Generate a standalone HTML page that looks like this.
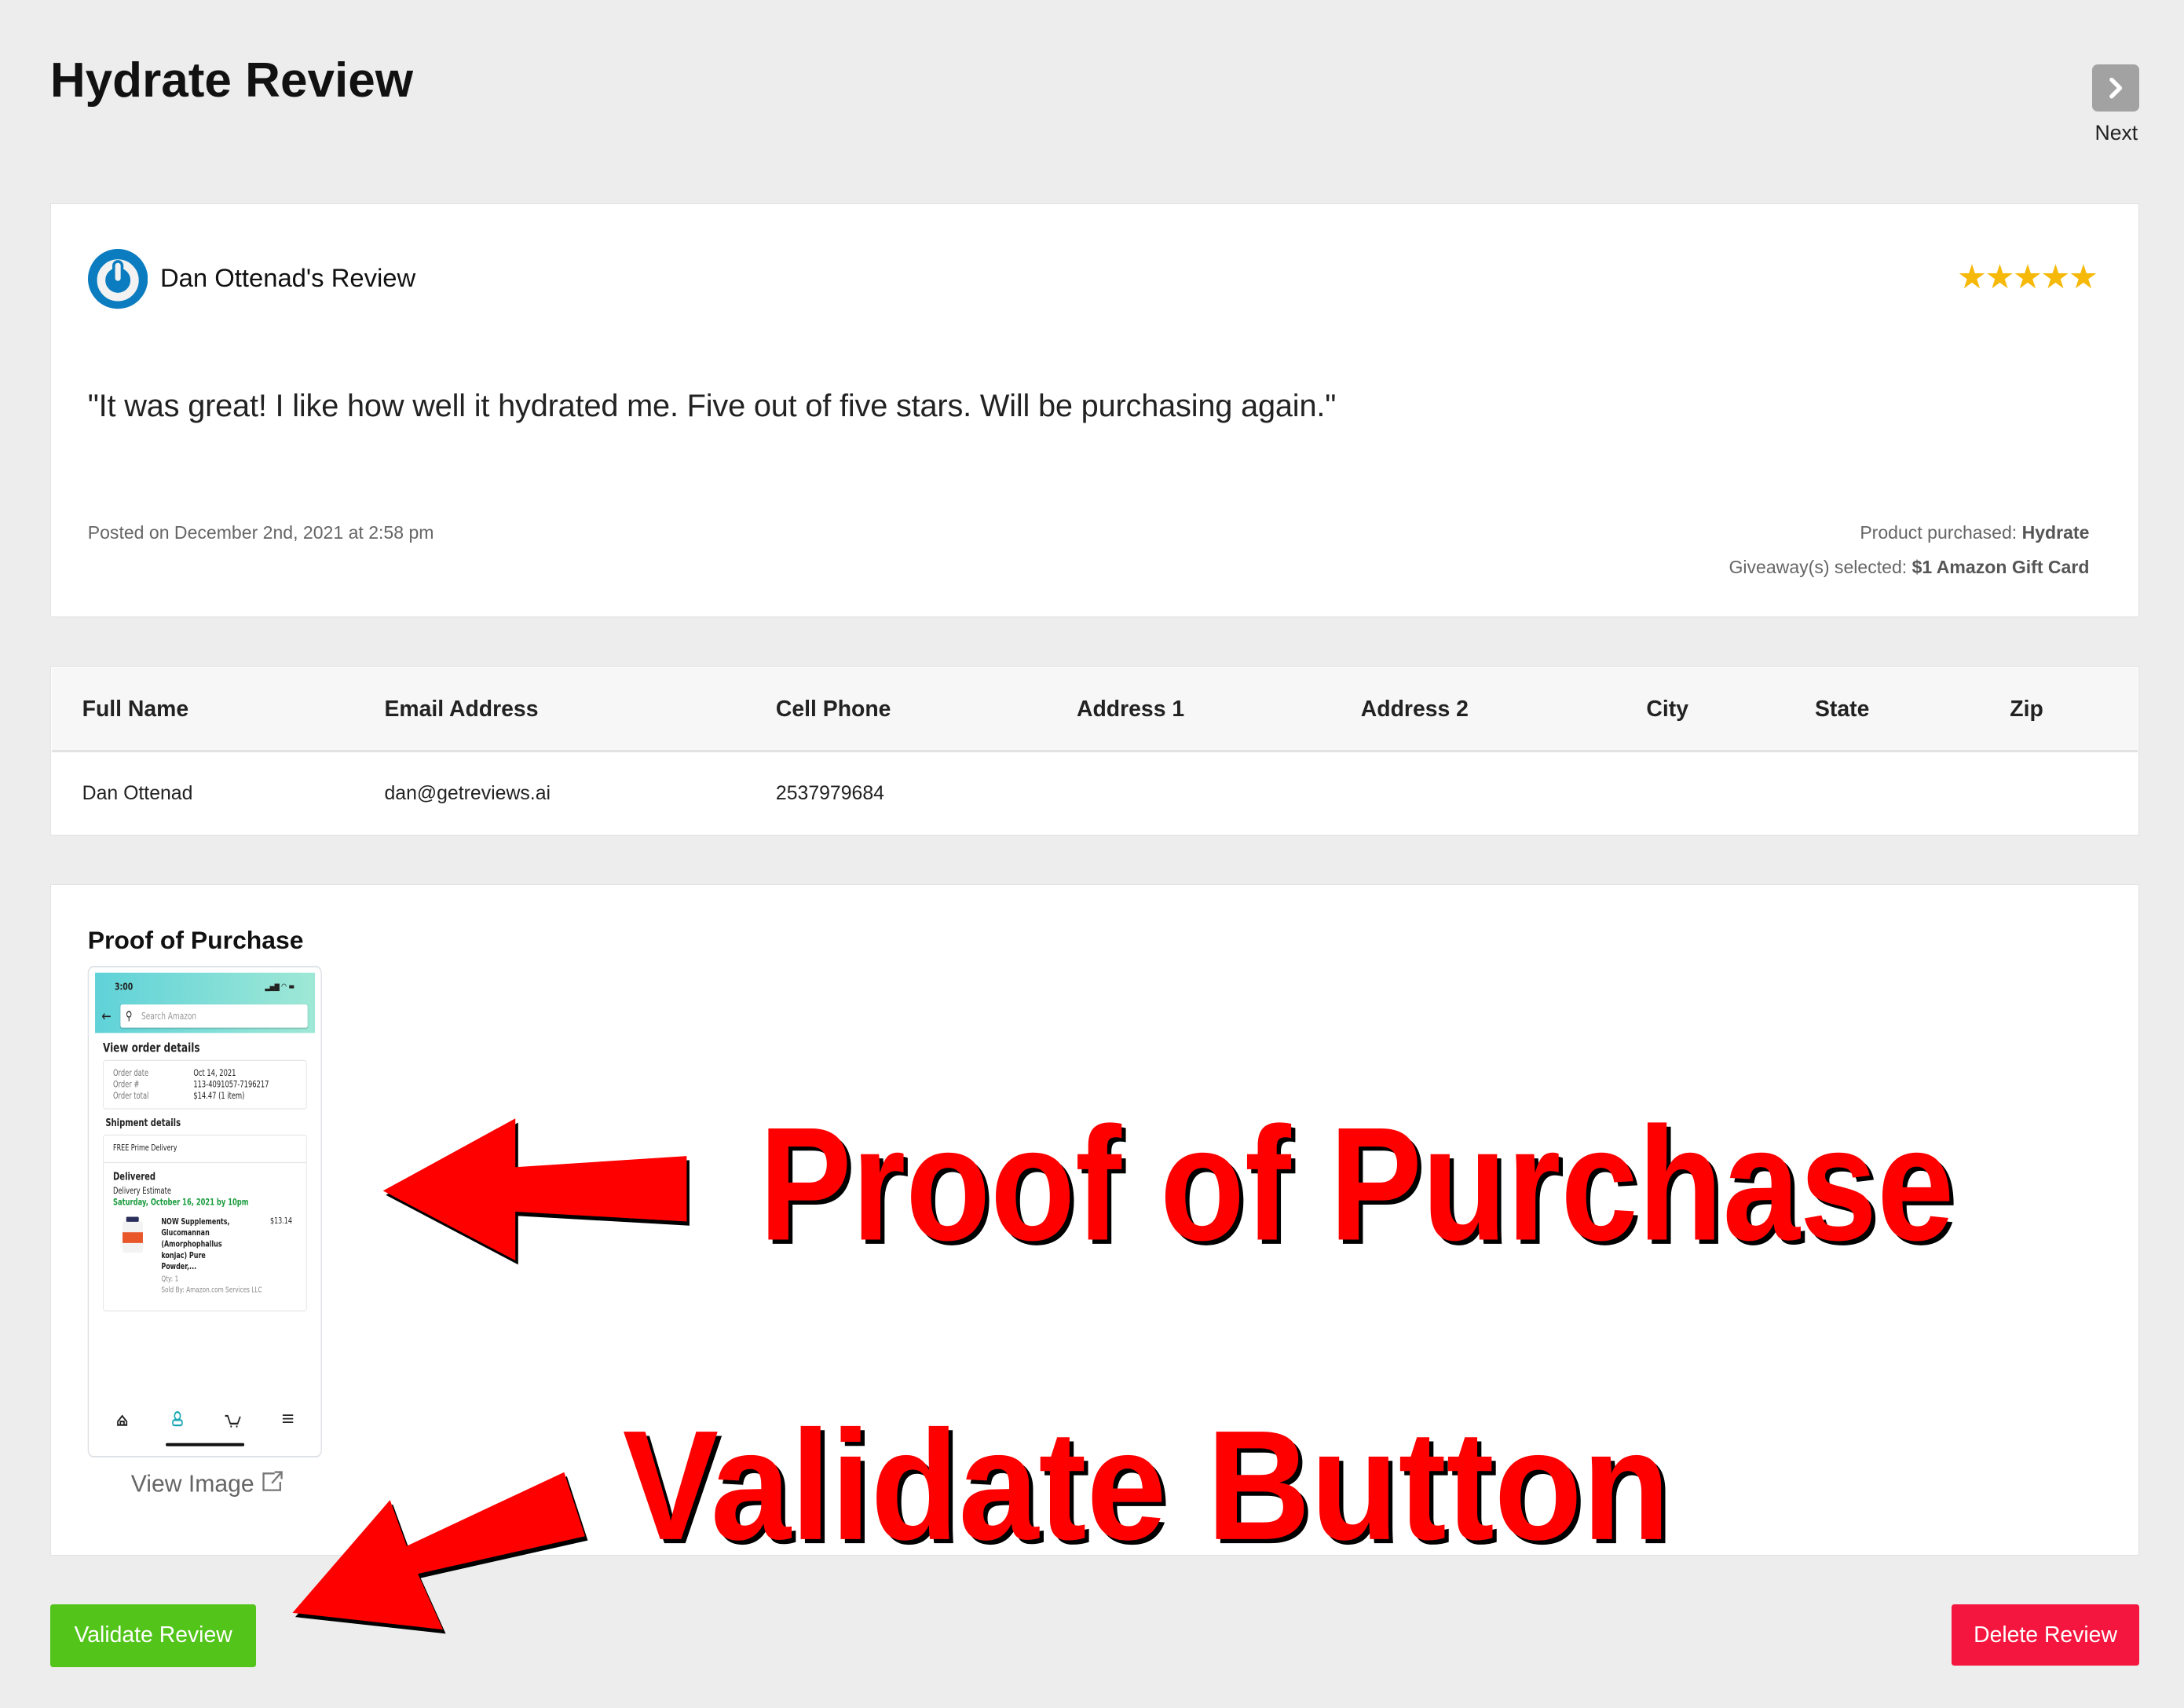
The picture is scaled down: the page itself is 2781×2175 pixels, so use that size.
<!DOCTYPE html>
<html><head><meta charset="utf-8">
<style>
*{box-sizing:border-box;margin:0;padding:0}
html,body{width:2781px;height:2175px;overflow:hidden;background:#ededed}
#root{zoom:1.7736;position:relative;width:1568px;height:1227px;font-family:"Liberation Sans","DejaVu Sans",sans-serif;color:#111}
.a{position:absolute;white-space:nowrap}
.card{position:absolute;background:#fff;border:1px solid #e2e2e2}
.th{position:absolute;top:500px;font-weight:bold;font-size:16px;color:#222}
.td{position:absolute;top:562px;font-size:14px;color:#222}
#ph{position:absolute;left:56.4px;top:687.9px;width:960px;height:1400px;transform:scale(0.18794,0.2525);transform-origin:0 0;font-family:"DejaVu Sans",sans-serif}
#ph .a{color:#222}
</style></head><body><div id="root">
<div class="a" style="left:36px;top:38px;font-size:35px;font-weight:bold;">Hydrate Review</div>
<div class="a" style="left:1502px;top:46px;width:34px;height:34px;background:#a2a2a2;border-radius:4px;">
<svg width="34" height="34" viewBox="0 0 34 34"><path d="M14 11 L20 17 L14 23" stroke="#fff" stroke-width="3" fill="none" stroke-linecap="round" stroke-linejoin="round"/></svg></div>
<div class="a" style="left:1504px;top:87px;font-size:15px;color:#222">Next</div>

<div class="card" style="left:36px;top:146px;width:1500px;height:297px"></div>
<svg class="a" style="left:63px;top:179px" width="43" height="43" viewBox="0 0 43 43"><circle cx="21.5" cy="21.5" r="21.5" fill="#0a7cbf"/><circle cx="21.5" cy="22.5" r="12" fill="none" stroke="#f2f2f2" stroke-width="6"/><rect x="18.5" y="9" width="6" height="15" rx="3" fill="#f2f2f2" stroke="#0a7cbf" stroke-width="2"/></svg>
<div class="a" style="left:115px;top:189px;font-size:18.5px;color:#111">Dan Ottenad's Review</div>
<div class="a" style="left:1405px;top:185px;font-size:24px;color:#f6b90a;letter-spacing:-1.5px">★★★★★</div>
<div class="a" style="left:63px;top:279px;font-size:22.4px;color:#222;letter-spacing:-0.1px">"It was great! I like how well it hydrated me. Five out of five stars. Will be purchasing again."</div>
<div class="a" style="left:63px;top:375px;font-size:13px;color:#666">Posted on December 2nd, 2021 at 2:58 pm</div>
<div class="a" style="right:68px;top:375px;font-size:13px;color:#666">Product purchased: <b style="color:#555">Hydrate</b></div>
<div class="a" style="right:68px;top:400px;font-size:13px;color:#666">Giveaway(s) selected: <b style="color:#555">$1 Amazon Gift Card</b></div>

<div class="card" style="left:36px;top:478px;width:1500px;height:122px"></div>
<div class="a" style="left:37px;top:479px;width:1498px;height:61px;background:#f7f7f7;border-bottom:2px solid #e2e2e2"></div>
<div class="th" style="left:59px">Full Name</div><div class="th" style="left:276px">Email Address</div><div class="th" style="left:557px">Cell Phone</div><div class="th" style="left:773px">Address 1</div><div class="th" style="left:977px">Address 2</div><div class="th" style="left:1182px">City</div><div class="th" style="left:1303px">State</div><div class="th" style="left:1443px">Zip</div>
<div class="td" style="left:59px">Dan Ottenad</div><div class="td" style="left:276px">dan@getreviews.ai</div><div class="td" style="left:557px">2537979684</div>

<div class="card" style="left:36px;top:635px;width:1500px;height:482px"></div>
<div class="a" style="left:63px;top:665px;font-size:18px;font-weight:bold">Proof of Purchase</div>

<div id="ph">
<div class="a" style="left:35px;top:22px;width:895px;height:1398px;border:5px solid #dfe2e6;border-radius:22px;background:#fff"></div>
<div class="a" style="left:63px;top:42px;width:840px;height:171px;background:linear-gradient(90deg,#5fd2d8,#9fe8d6)"></div>
<div class="a" style="left:138px;top:64px;font-size:28px;font-weight:bold">3:00</div>
<div class="a" style="left:712px;top:66px;font-size:24px;font-weight:bold">▂▄▆ ◠ ▬</div>
<div class="a" style="left:88px;top:140px;font-size:44px">←</div>
<div class="a" style="left:160px;top:132px;width:715px;height:66px;background:#fff;border-radius:7px;box-shadow:0 2px 4px rgba(0,0,0,.2)"></div>
<div class="a" style="left:180px;top:144px;font-size:34px">⚲</div>
<div class="a" style="left:240px;top:150px;font-size:27px;color:#999!important">Search Amazon</div>
<div class="a" style="left:93px;top:234px;font-size:36px;font-weight:bold">View order details</div>
<div class="a" style="left:93px;top:290px;width:779px;height:140px;border:3px solid #e6e6e6;border-radius:10px"></div>
<div class="a" style="left:132px;top:312px;font-size:25px;line-height:32px;color:#777!important">Order date<br>Order #<br>Order total</div>
<div class="a" style="left:439px;top:312px;font-size:25px;line-height:32px">Oct 14, 2021<br>113-4091057-7196217<br>$14.47 (1 item)</div>
<div class="a" style="left:103px;top:450px;font-size:30px;font-weight:bold">Shipment details</div>
<div class="a" style="left:93px;top:502px;width:779px;height:503px;border:3px solid #e6e6e6;border-radius:10px"></div>
<div class="a" style="left:93px;top:580px;width:779px;height:3px;background:#e6e6e6"></div>
<div class="a" style="left:132px;top:525px;font-size:24px">FREE Prime Delivery</div>
<div class="a" style="left:132px;top:603px;font-size:30px;font-weight:bold">Delivered</div>
<div class="a" style="left:132px;top:648px;font-size:25px">Delivery Estimate</div>
<div class="a" style="left:132px;top:680px;font-size:25px;font-weight:bold;color:#1a9c3e!important">Saturday, October 16, 2021 by 10pm</div>
<div class="a" style="left:168px;top:748px;width:78px;height:90px;background:#f3f3f3;border-radius:8px"></div>
<div class="a" style="left:182px;top:736px;width:48px;height:14px;background:#2a2e5a;border-radius:3px"></div>
<div class="a" style="left:168px;top:780px;width:78px;height:30px;background:#e8562a"></div>
<div class="a" style="left:316px;top:733px;font-size:24px;font-weight:bold;line-height:32px">NOW Supplements,<br>Glucomannan<br>(Amorphophallus<br>konjac) Pure<br>Powder,...</div>
<div class="a" style="left:732px;top:733px;font-size:24px">$13.14</div>
<div class="a" style="left:316px;top:896px;font-size:22px;line-height:32px;color:#888!important">Qty: 1<br>Sold By: Amazon.com Services LLC</div>
<svg class="a" style="left:140px;top:1280px" width="700" height="60" viewBox="0 0 700 60"><path d="M10 38 L27 22 L44 38 V48 H10Z M20 48 V38 H34 V48" fill="none" stroke="#222" stroke-width="5"/><circle cx="238" cy="22" r="11" fill="none" stroke="#1aa7b5" stroke-width="5"/><rect x="220" y="34" width="36" height="15" rx="6" fill="none" stroke="#1aa7b5" stroke-width="5"/><path d="M420 22 L430 22 L440 44 H468 L478 24" fill="none" stroke="#222" stroke-width="5"/><circle cx="443" cy="52" r="3" fill="#222"/><circle cx="465" cy="52" r="3" fill="#222"/><path d="M640 20 H680 M640 30 H680 M640 40 H680" stroke="#222" stroke-width="4"/></svg>
<div class="a" style="left:333px;top:1379px;width:300px;height:9px;background:#111;border-radius:5px"></div>
</div>
<div class="a" style="left:94px;top:1055px;font-size:17px;color:#666">View Image <svg width="17" height="17" viewBox="0 0 17 17" style="vertical-align:-1px"><path d="M10 3 H2 V15 H14 V9 M8 10 L15 2 M10 2 H15 V7" fill="none" stroke="#777" stroke-width="1.3"/></svg></div>

<svg class="a" style="left:0;top:0" width="1568" height="1227" viewBox="0 0 1568 1227">
<g transform="translate(2,3)" fill="#000"><polygon points="275,855 370,803 370,838 493,830 493,877 370,870 370,905"/><polygon points="210,1158 280,1077 292,1110 405,1057 420,1103 300,1130 318,1170"/></g>
<g fill="#fe0000"><polygon points="275,855 370,803 370,838 493,830 493,877 370,870 370,905"/><polygon points="210,1158 280,1077 292,1110 405,1057 420,1103 300,1130 318,1170"/></g>
<g font-family="Liberation Sans, sans-serif" font-weight="bold">
<text x="548" y="893" font-size="116" textLength="858" lengthAdjust="spacingAndGlyphs" fill="#000">Proof of Purchase</text>
<text x="545" y="890" font-size="116" textLength="858" lengthAdjust="spacingAndGlyphs" fill="#fe0000">Proof of Purchase</text>
<text x="450" y="1108" font-size="112" textLength="752" lengthAdjust="spacingAndGlyphs" fill="#000">Validate Button</text>
<text x="447" y="1105" font-size="112" textLength="752" lengthAdjust="spacingAndGlyphs" fill="#fe0000">Validate Button</text>
</g></svg>

<div class="a" style="left:36px;top:1152px;width:148px;height:45px;background:#52c41a;border-radius:2px;color:#fff;font-size:16px;line-height:45px;text-align:center">Validate Review</div>
<div class="a" style="left:1401px;top:1152px;width:135px;height:44px;background:#f5163f;border-radius:2px;color:#fff;font-size:16px;line-height:44px;text-align:center">Delete Review</div>
</div></body></html>
